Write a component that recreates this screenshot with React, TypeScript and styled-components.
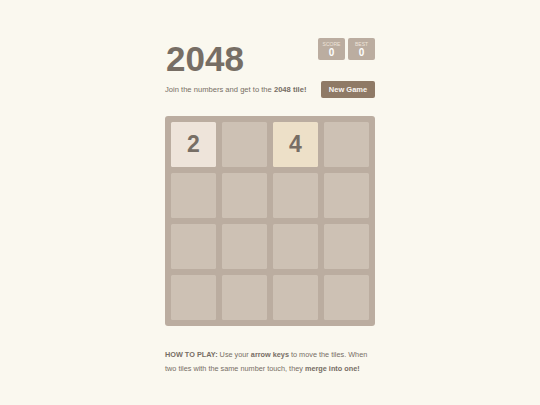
import React from "react";
import styled, { createGlobalStyle } from "styled-components";

const Global = createGlobalStyle`
  html, body { margin: 0; padding: 0; background: #faf8ef; }
  body { font-family: "Liberation Sans", Arial, sans-serif; color: #776e65; }
`;

const Container = styled.div`
  width: 210px;
  margin: 0 auto;
  padding-top: 38px;
`;

const Heading = styled.div`
  display: flex;
  justify-content: space-between;
  align-items: flex-start;
`;

const Title = styled.h1`
  margin: 0;
  font-size: 35px;
  line-height: 1;
  font-weight: bold;
  color: #776e65;
  padding-top: 3px;
  margin-left: 1px;
`;

const Scores = styled.div`
  display: flex;
  gap: 3px;
`;

const ScoreBox = styled.div`
  width: 27px;
  height: 22px;
  background: #bbada0;
  border-radius: 2px;
  display: flex;
  flex-direction: column;
  align-items: center;
  padding-top: 3px;
  box-sizing: border-box;
`;

const ScoreLabel = styled.div`
  font-size: 5px;
  line-height: 6px;
  color: #eee4da;
  text-transform: uppercase;
`;

const ScoreValue = styled.div`
  font-size: 10px;
  line-height: 11px;
  font-weight: bold;
  color: #fff;
`;

const AboveGame = styled.div`
  display: flex;
  justify-content: space-between;
  align-items: center;
  margin-top: 5px;
`;

const Intro = styled.p`
  margin: 0;
  font-size: 7.6px;
  line-height: 12px;
  color: #776e65;
  b { font-weight: bold; }
`;

const NewGame = styled.button`
  width: 54px;
  height: 17px;
  background: #8f7a66;
  border: none;
  border-radius: 2px;
  color: #f9f6f2;
  font-family: inherit;
  font-size: 7.5px;
  font-weight: bold;
  padding: 0;
`;

const Board = styled.div`
  margin-top: 18px;
  background: #bbada0;
  border-radius: 3px;
  padding: 6px;
  display: grid;
  grid-template-columns: repeat(4, 45px);
  grid-auto-rows: 45px;
  gap: 6px;
  width: 210px;
  box-sizing: border-box;
`;

const Cell = styled.div<{ $v?: number }>`
  border-radius: 1.5px;
  background: ${(p) => (p.$v === 2 ? "#eee4da" : p.$v === 4 ? "#ede0c8" : "#cdc1b4")};
  display: flex;
  align-items: center;
  justify-content: center;
  font-size: 23px;
  font-weight: bold;
  color: #776e65;
`;

const HowTo = styled.p`
  margin: 22px 0 0;
  font-size: 7.3px;
  line-height: 13.5px;
  color: #776e65;
  b { font-weight: bold; }
`;

const cells = [2, 0, 4, 0, 0, 0, 0, 0, 0, 0, 0, 0, 0, 0, 0, 0];

export default function App() {
  return (
    <>
      <Global />
      <Container>
        <Heading>
          <Title>2048</Title>
          <Scores>
            <ScoreBox>
              <ScoreLabel>Score</ScoreLabel>
              <ScoreValue>0</ScoreValue>
            </ScoreBox>
            <ScoreBox>
              <ScoreLabel>Best</ScoreLabel>
              <ScoreValue>0</ScoreValue>
            </ScoreBox>
          </Scores>
        </Heading>
        <AboveGame>
          <Intro>
            Join the numbers and get to the <b>2048 tile!</b>
          </Intro>
          <NewGame>New Game</NewGame>
        </AboveGame>
        <Board>
          {cells.map((v, i) => (
            <Cell key={i} $v={v}>
              {v ? v : ""}
            </Cell>
          ))}
        </Board>
        <HowTo>
          <b>HOW TO PLAY:</b> Use your <b>arrow keys</b> to move the tiles. When two tiles with the same number touch, they <b>merge into one!</b>
        </HowTo>
      </Container>
    </>
  );
}
